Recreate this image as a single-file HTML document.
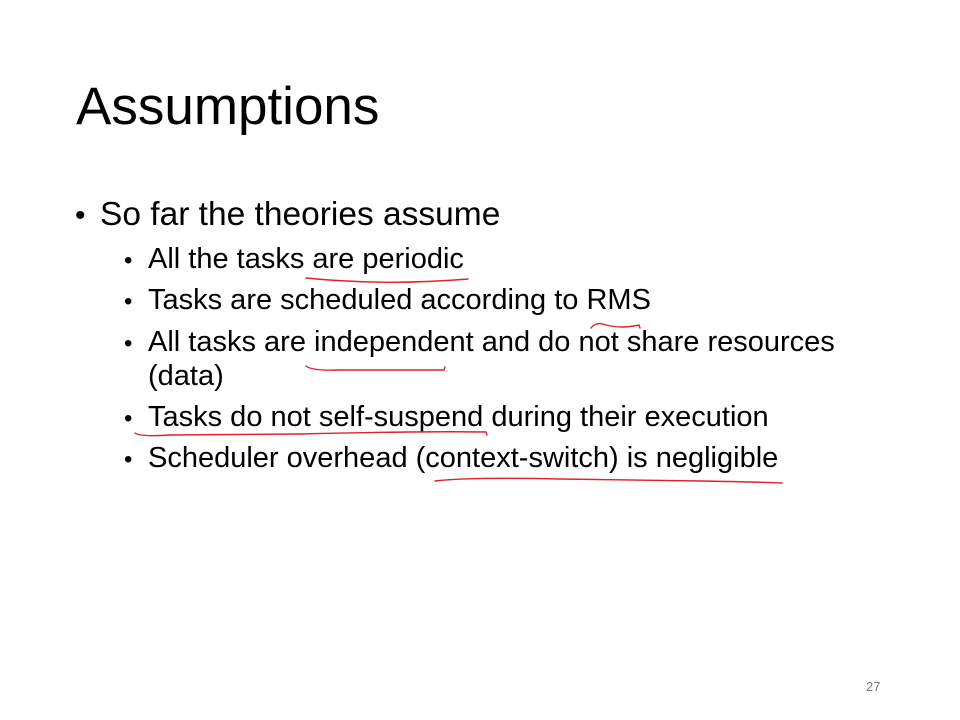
<!DOCTYPE html>
<html><head><meta charset="utf-8"><style>
html,body{margin:0;padding:0;background:#fff;}
body{width:960px;height:720px;position:relative;overflow:hidden;font-family:"Liberation Sans",sans-serif;color:#000;}
.t{position:absolute;white-space:nowrap;line-height:1;}
.s{font-size:29px;}
.b{position:absolute;line-height:1;}
</style></head><body>
<div class="t" style="left:76px;top:80px;font-size:53px;">Assumptions</div>
<div class="b" style="left:75px;top:201px;font-size:30px;">•</div>
<div class="t" style="left:100px;top:198px;font-size:33.5px;">So far the theories assume</div>

<div class="b s" style="left:124px;top:249px;font-size:24px;">•</div>
<div class="t s" style="left:148px;top:245px;">All the tasks are periodic</div>
<div class="b s" style="left:124px;top:290px;font-size:24px;">•</div>
<div class="t s" style="left:148px;top:286px;">Tasks are scheduled according to RMS</div>
<div class="b s" style="left:124px;top:332px;font-size:24px;">•</div>
<div class="t s" style="left:148px;top:328px;">All tasks are independent and do not share resources</div>
<div class="t s" style="left:148px;top:362px;">(data)</div>
<div class="b s" style="left:124px;top:407px;font-size:24px;">•</div>
<div class="t s" style="left:148px;top:403px;">Tasks do not self-suspend during their execution</div>
<div class="b s" style="left:124px;top:448px;font-size:24px;">•</div>
<div class="t s" style="left:148px;top:444px;">Scheduler overhead (context-switch) is negligible</div>

<div class="t" style="left:866px;top:680px;font-size:13px;color:#7a7a7a;">27</div>

<svg width="960" height="720" style="position:absolute;left:0;top:0" fill="none" stroke="#e0202a" stroke-width="1.4" stroke-linecap="round">
<path d="M306 278 Q385 286 468 279"/>
<path d="M591 328 Q596 321 606 325 Q622 329 639 325 L640 328"/>
<path d="M306 366 Q312 371 340 370 L444 370 L445 367"/>
<path d="M135 433 Q140 437 170 435 L300 434 Q420 431 486 432 L487 435"/>
<path d="M435 481 Q470 477 560 479 L700 481 Q760 482 782 483"/>
</svg>
</body></html>
